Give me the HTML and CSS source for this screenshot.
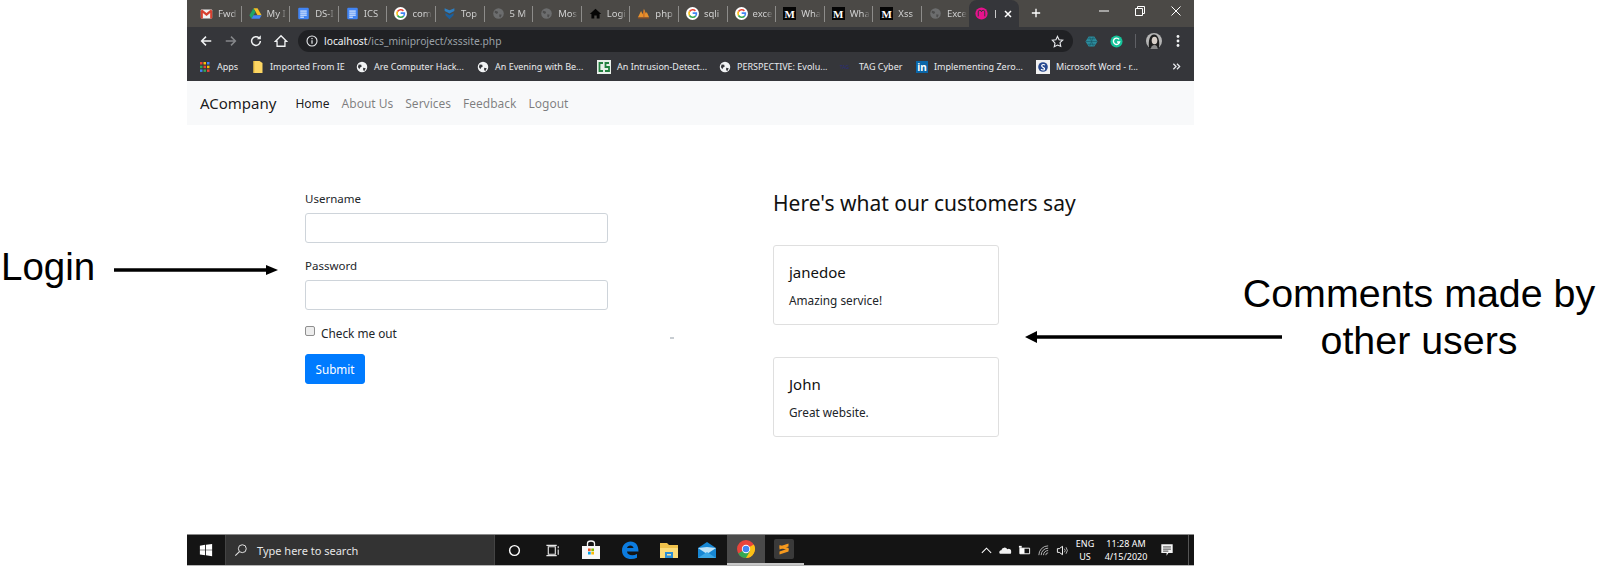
FILE: index.html
```html
<!DOCTYPE html>
<html lang="en">
<head>
  <meta charset="UTF-8">
  <title>ACompany</title>
  <link rel="stylesheet" href="styles.css">
</head>
<body>
  <!-- shared icons -->
  <svg class="sprite" xmlns="http://www.w3.org/2000/svg">
    <symbol id="i-gmail" viewBox="0 0 16 16"><rect x="1" y="3" width="14" height="11" rx="1" fill="#f2f2f2"/><path d="M1 4.500V14h2.500V7.500L8 11l4.500-3.500V14H15V4.500L13.500 3 8 7.500 2.500 3z" fill="#d8402f"/></symbol>
    <symbol id="i-drive" viewBox="0 0 16 16"><path d="M5.500 1.500h5L15.500 10h-5z" fill="#f6c026"/><path d="M5.500 1.500L.5 10 3 14.500 8 6z" fill="#1fa463"/><path d="M3 14.500h10L15.500 10h-10z" fill="#4285f4"/></symbol>
    <symbol id="i-docs" viewBox="0 0 16 16"><rect x="1.500" y="1" width="13" height="14" rx="1.500" fill="#4285f4"/><path d="M4 5h8M4 7.500h8M4 10h8M4 12.500h4.500" stroke="#fff" stroke-width="1.200"/></symbol>
    <symbol id="i-google" viewBox="0 0 16 16"><circle cx="8" cy="8" r="8" fill="#fff"/><path d="M11.600 4.700A4.800 4.800 0 0 0 4.300 5.500" fill="none" stroke="#ea4335" stroke-width="2"/><path d="M4.300 5.500a4.800 4.800 0 0 0 0 5" fill="none" stroke="#fbbc05" stroke-width="2"/><path d="M4.300 10.500a4.800 4.800 0 0 0 7.500.7" fill="none" stroke="#34a853" stroke-width="2"/><path d="M11.800 11.200A4.800 4.800 0 0 0 12.800 7.600H8.200" fill="none" stroke="#4285f4" stroke-width="2"/></symbol>
    <symbol id="i-shield" viewBox="0 0 16 16"><path d="M2 1.500l6 2.500 6-2.500v3.500l-6 3-6-3z" fill="#2f7fc1"/><path d="M3 7.500l5 2.500 5-2.500v2.500L8 15 3 10z" fill="#1c5f9c"/></symbol>
    <symbol id="i-dimglobe" viewBox="0 0 16 16"><circle cx="8" cy="8" r="6.500" fill="#6c6d6e"/><path d="M4 4.500l3 1 .5 2-2 1-2.500-2zM9 9l3 .5-1.500 3.500-1.500-1z" fill="#4d4d4d"/></symbol>
    <symbol id="i-house" viewBox="0 0 16 16"><path d="M8 2L1 8.500h2V14h3.500v-3.500h3V14H13V8.500h2z" fill="#050505"/></symbol>
    <symbol id="i-php" viewBox="0 0 16 16"><path d="M1 13L5 5l2 4 1.500-7L11 8l1-2 3 7z" fill="#e8912d"/><path d="M1 13h14v1.500H1z" fill="#7d4a2a"/><path d="M8.500 5v8" stroke="#b5541c" stroke-width="1"/></symbol>
    <symbol id="i-pink" viewBox="0 0 16 16"><circle cx="8" cy="8" r="7.500" fill="#e6128c"/><path d="M4 11.500V6a2 2 0 0 1 4 0 2 2 0 0 1 4 0v5.500" fill="none" stroke="#35363a" stroke-width="1.200"/></symbol>
    <symbol id="i-globe" viewBox="0 0 16 16"><circle cx="8" cy="8" r="7" fill="#f1f3f4"/><path d="M3.500 4.500l3.500.5.500 2.500-2 1-1 2.500-2-3zM9.500 9l3.500.5-2 4-1.500-1.500z" fill="#35363a"/></symbol>
  </svg>

  <div class="page">
    <div class="shot">
      <div class="tabstrip">
        <div class="tab"><svg class="fav"><use href="#i-gmail"/></svg><span class="tab-title">Fwd</span></div>
        <div class="tab"><svg class="fav"><use href="#i-drive"/></svg><span class="tab-title">My I</span></div>
        <div class="tab"><svg class="fav"><use href="#i-docs"/></svg><span class="tab-title">DS-I</span></div>
        <div class="tab"><svg class="fav"><use href="#i-docs"/></svg><span class="tab-title">ICS</span></div>
        <div class="tab"><svg class="fav"><use href="#i-google"/></svg><span class="tab-title">com</span></div>
        <div class="tab"><svg class="fav"><use href="#i-shield"/></svg><span class="tab-title">Top</span></div>
        <div class="tab"><svg class="fav"><use href="#i-dimglobe"/></svg><span class="tab-title">5 M</span></div>
        <div class="tab"><svg class="fav"><use href="#i-dimglobe"/></svg><span class="tab-title">Mos</span></div>
        <div class="tab"><svg class="fav"><use href="#i-house"/></svg><span class="tab-title">Logi</span></div>
        <div class="tab"><svg class="fav"><use href="#i-php"/></svg><span class="tab-title">php</span></div>
        <div class="tab"><svg class="fav"><use href="#i-google"/></svg><span class="tab-title">sqli</span></div>
        <div class="tab"><svg class="fav"><use href="#i-google"/></svg><span class="tab-title">exce</span></div>
        <div class="tab"><span class="fav fav-m">M</span><span class="tab-title">Wha</span></div>
        <div class="tab"><span class="fav fav-m">M</span><span class="tab-title">Wha</span></div>
        <div class="tab"><span class="fav fav-m">M</span><span class="tab-title">Xss</span></div>
        <div class="tab tab-last"><svg class="fav"><use href="#i-dimglobe"/></svg><span class="tab-title">Exce</span></div>
        <div class="tab tab-active">
          <svg class="fav"><use href="#i-pink"/></svg>
          <span class="tab-bar"></span>
          <svg class="tab-close" viewBox="0 0 10 10"><path d="M2 2l6 6M8 2l-6 6" stroke="#fff" stroke-width="1.500"/></svg>
        </div>
        <svg class="newtab" viewBox="0 0 12 12"><path d="M6 1v10M1 6h10" stroke="#fff" stroke-width="1.600"/></svg>
        <div class="winctl">
          <span class="winbtn"><svg viewBox="0 0 12 12"><path d="M1 6h10" stroke="#fff" stroke-width="1"/></svg></span>
          <span class="winbtn"><svg viewBox="0 0 12 12"><path d="M1.500 3.500h7v7h-7zM3.500 3.500v-2h7v7h-2" fill="none" stroke="#fff" stroke-width="1"/></svg></span>
          <span class="winbtn"><svg viewBox="0 0 12 12"><path d="M1.500 1.500l9 9M10.500 1.500l-9 9" stroke="#fff" stroke-width="1"/></svg></span>
        </div>
      </div>

      <div class="toolbar">
        <svg class="tool" viewBox="0 0 16 16"><path d="M14 8H3M8 3L3 8l5 5" fill="none" stroke="#f1f3f4" stroke-width="1.700"/></svg>
        <svg class="tool" viewBox="0 0 16 16"><path d="M2 8h11M8 3l5 5-5 5" fill="none" stroke="#85878a" stroke-width="1.700"/></svg>
        <svg class="tool" viewBox="0 0 16 16"><path d="M13 8a5 5 0 1 1-1.500-3.500" fill="none" stroke="#f1f3f4" stroke-width="1.700"/><path d="M13.500 1.500v4.500H9z" fill="#f1f3f4"/></svg>
        <svg class="tool" viewBox="0 0 16 16"><path d="M8 2L1.500 8.500h2v5.500h9V8.500h2z" fill="none" stroke="#f1f3f4" stroke-width="1.500"/></svg>
        <div class="urlbar">
          <svg class="url-info" viewBox="0 0 12 12"><circle cx="6" cy="6" r="5" fill="none" stroke="#e8eaed" stroke-width="1.100"/><path d="M6 5.200v3.600M6 3v1.200" stroke="#e8eaed" stroke-width="1.200"/></svg>
          <span class="url-text"><b>localhost</b>/ics_miniproject/xsssite.php</span>
          <svg class="url-star" viewBox="0 0 14 14"><path d="M7 1.500l1.700 3.600 3.900.5-2.900 2.700.8 3.900L7 10.800l-3.500 1.900.8-3.900L1.400 5.600l3.900-.5z" fill="none" stroke="#e8eaed" stroke-width="1.200"/></svg>
        </div>
        <div class="extensions">
          <svg class="ext" viewBox="0 0 14 14"><path d="M4 1.500h6L13.500 7 10 12.500H4L.5 7z" fill="#2c8b9c"/><path d="M1 7h12M3 4h8M3 10h8M5 2l4 10M9 2l-4 10" stroke="#1a5a68" stroke-width=".7"/></svg>
          <svg class="ext" viewBox="0 0 14 14"><circle cx="7" cy="7" r="6.500" fill="#15c39a"/><path d="M9.800 4.700A3.400 3.400 0 1 0 10.400 7.500H7.600" fill="none" stroke="#fff" stroke-width="1.500"/></svg>
          <span class="ext-sep"></span>
          <svg class="avatar" viewBox="0 0 16 16"><circle cx="8" cy="8" r="8" fill="#b5b5b5"/><path d="M3 15C2 7 4 1.500 8 1.500S14 7 13 15z" fill="#1f1f1f"/><ellipse cx="8.500" cy="7.500" rx="2.800" ry="3.800" fill="#d8cfc8"/><path d="M5 16c0-3 1.500-4 3.500-4s3 1 3 4z" fill="#8a8a8a"/></svg>
          <svg class="dots" viewBox="0 0 4 14"><circle cx="2" cy="2.500" r="1.400" fill="#f1f3f4"/><circle cx="2" cy="7" r="1.400" fill="#f1f3f4"/><circle cx="2" cy="11.500" r="1.400" fill="#f1f3f4"/></svg>
        </div>
      </div>

      <div class="bookmarks">
        <div class="bm">
          <svg class="bm-icon" viewBox="0 0 12 12"><path d="M1 1h2.500v2.500H1z" fill="#ea4335"/><path d="M4.500 1H7v2.500H4.500z" fill="#fbbc05"/><path d="M8 1h2.500v2.500H8z" fill="#4285f4"/><path d="M1 4.700h2.500v2.500H1z" fill="#34a853"/><path d="M4.500 4.700H7v2.500H4.500z" fill="#ea4335"/><path d="M8 4.700h2.500v2.500H8z" fill="#fbbc05"/><path d="M1 8.400h2.500v2.500H1z" fill="#4285f4"/><path d="M4.500 8.400H7v2.500H4.500z" fill="#34a853"/><path d="M8 8.400h2.500v2.500H8z" fill="#ea4335"/></svg>
          <span>Apps</span>
        </div>
        <div class="bm">
          <svg class="bm-icon" viewBox="0 0 12 12"><path d="M1.500 0h6l3 2v10h-9z" fill="#fdd663"/><path d="M1.500 0h1v12h-1z" fill="#e8b93a"/></svg>
          <span>Imported From IE</span>
        </div>
        <div class="bm"><svg class="bm-icon"><use href="#i-globe"/></svg><span>Are Computer Hack...</span></div>
        <div class="bm"><svg class="bm-icon"><use href="#i-globe"/></svg><span>An Evening with Be...</span></div>
        <div class="bm">
          <svg class="bm-icon bm-wide" viewBox="0 0 14 14"><rect width="14" height="14" fill="#e9efe9"/><path d="M6 3H2.500v8H6M12 3H8.500v4H12v4H8" fill="none" stroke="#23803f" stroke-width="1.800"/></svg>
          <span>An Intrusion-Detect...</span>
        </div>
        <div class="bm"><svg class="bm-icon"><use href="#i-globe"/></svg><span>PERSPECTIVE: Evolu...</span></div>
        <div class="bm"><span class="bm-tag">TAG</span><span>TAG Cyber</span></div>
        <div class="bm"><span class="bm-in">in</span><span>Implementing Zero...</span></div>
        <div class="bm">
          <svg class="bm-icon bm-wide" viewBox="0 0 14 14"><rect width="14" height="14" fill="#f2f2f2"/><circle cx="7" cy="7" r="4.800" fill="#26488f"/><path d="M9 5C7 3.800 5 5 6 6.500s3 1 2.500 2.700C8 10.500 6 10 5 9.300" fill="none" stroke="#fff" stroke-width="1.200"/></svg>
          <span>Microsoft Word - r...</span>
        </div>
        <svg class="bm-more" viewBox="0 0 10 10"><path d="M1.500 2l3 3-3 3M5.500 2l3 3-3 3" fill="none" stroke="#e8eaed" stroke-width="1.400"/></svg>
      </div>

      <nav class="navbar">
        <a class="brand">ACompany</a>
        <a class="nav-link nav-active">Home</a>
        <a class="nav-link">About Us</a>
        <a class="nav-link">Services</a>
        <a class="nav-link">Feedback</a>
        <a class="nav-link">Logout</a>
      </nav>

      <main class="content">
        <form class="login-form">
          <label class="field-label">Username</label>
          <input class="field" type="text">
          <label class="field-label">Password</label>
          <input class="field" type="password">
          <label class="check-row"><span class="check-box"></span>Check me out</label>
          <button class="submit-btn" type="button">Submit</button>
        </form>
        <section class="comments">
          <h2 class="comments-title">Here's what our customers say</h2>
          <div class="card">
            <h3 class="card-name">janedoe</h3>
            <p class="card-text">Amazing service!</p>
          </div>
          <div class="card">
            <h3 class="card-name">John</h3>
            <p class="card-text">Great website.</p>
          </div>
        </section>
      </main>

      <div class="taskbar">
        <div class="start">
          <svg viewBox="0 0 16 16"><path d="M1 3l6-.9V7.600H1zM8 2l7-1v6.600H8zM1 8.400h6v5.500l-6-.9zM8 8.400h7V15l-7-1z" fill="#fff"/></svg>
        </div>
        <div class="search">
          <svg viewBox="0 0 16 16"><circle cx="9.500" cy="6.500" r="4.500" fill="none" stroke="#e6e6e6" stroke-width="1.100"/><path d="M6.200 9.800L1.500 14.500" stroke="#e6e6e6" stroke-width="1.200"/></svg>
          <span>Type here to search</span>
        </div>
        <div class="task"><svg viewBox="0 0 16 16"><circle cx="8" cy="8" r="5.200" fill="none" stroke="#fff" stroke-width="1.500"/></svg></div>
        <div class="task"><svg viewBox="0 0 16 16"><path d="M3.500 4h7.500v8H3.500zM1.500 2.500h11M1.500 13.500h11" fill="none" stroke="#e6e6e6" stroke-width="1.200"/><path d="M13.500 3.500h1.200v2h-1.200zM13.500 7h1.200v5.500h-1.200z" fill="#e6e6e6"/></svg></div>
        <div class="task"><svg class="task-big" viewBox="0 0 20 20"><path d="M1 6h18v13H1z" fill="#f7f7f7"/><path d="M6.500 6V3.500a3.500 2.500 0 0 1 7 0V6" fill="none" stroke="#f7f7f7" stroke-width="1.300"/><path d="M7 8.500h2.700v2.700H7z" fill="#f25022"/><path d="M10.300 8.500H13v2.700h-2.700z" fill="#7fba00"/><path d="M7 11.800h2.700v2.700H7z" fill="#00a4ef"/><path d="M10.300 11.800H13v2.700h-2.700z" fill="#ffb900"/></svg></div>
        <div class="task"><svg class="task-big" viewBox="0 0 20 20"><path d="M2 10.500C2 5 6 1.500 10.500 1.500 15.500 1.500 18.500 5 18.500 11.500H7c.3 3.800 5.500 5 10 2.500v3.800c-6 2.700-15 1.200-15-7.300zM7 8h6.500C13.300 4.500 7.500 4.500 7 8z" fill="#0c7ce0"/></svg></div>
        <div class="task"><svg class="task-big" viewBox="0 0 20 20"><path d="M1 3h7l2 2h9v13H1z" fill="#f0c24b"/><path d="M1 8h18v10H1z" fill="#fbdc79"/><path d="M6 12h8v6H6z" fill="#2a8fd8"/><path d="M8 14h4v1.500H8z" fill="#f6e3a0"/></svg></div>
        <div class="task"><svg class="task-big" viewBox="0 0 20 20"><path d="M1 8l9-6 9 6v10H1z" fill="#1787d4"/><path d="M1 8l9 6 9-6-9-1z" fill="#bfe3f7"/><path d="M1 18l9-6 9 6z" fill="#3ba7e6"/></svg></div>
        <div class="task task-active"><svg class="task-big" viewBox="0 0 20 20"><circle cx="10" cy="10" r="9" fill="#e8453c"/><path d="M10 10v9a9 9 0 0 0 7.800-13.500z" fill="#fbc116"/><path d="M10 10L2.200 14.500A9 9 0 0 0 10 19l3.900-6.800z" fill="#34a853"/><circle cx="10" cy="10" r="4.200" fill="#fff"/><circle cx="10" cy="10" r="3.300" fill="#4285f4"/></svg></div>
        <div class="task task-open"><span class="sublime"><svg viewBox="0 0 14 14"><path d="M11.500 1.500L2.500 4.500v3l9-3zM11.500 6.500l-9 3v3l9-3z" fill="#f79a1e"/><path d="M2.500 5.500l9 3V6l-9-3z" fill="#f79a1e"/></svg></span></div>

        <div class="tray">
          <svg class="tray-icon" viewBox="0 0 14 14"><path d="M2 9.500L7 4.500l5 5" fill="none" stroke="#fff" stroke-width="1.100"/></svg>
          <svg class="tray-icon" viewBox="0 0 14 14"><path d="M1 10.500a2.200 2.200 0 0 1 1.500-3.800 3.500 3.500 0 0 1 6.500-1A2.600 2.600 0 0 1 13 8.500a2 2 0 0 1-.5 2z" fill="#f1f1f1"/></svg>
          <svg class="tray-icon" viewBox="0 0 14 14"><path d="M2 4.500h10.500v6H2z" fill="none" stroke="#fff" stroke-width="1"/><path d="M2 4.500h5v6H2z" fill="#fff"/><path d="M1 2v2h3V2z" fill="#fff"/></svg>
          <svg class="tray-icon" viewBox="0 0 14 14"><path d="M2 12a10 10 0 0 1 10-10M4.500 12A7.500 7.500 0 0 1 12 4.500M7 12a5 5 0 0 1 5-5M9.500 12A2.500 2.500 0 0 1 12 9.500" fill="none" stroke="#cfcfcf" stroke-width=".9"/></svg>
          <svg class="tray-icon" viewBox="0 0 14 14"><path d="M1.500 5h2L7 2.500v9L3.500 9h-2z" fill="none" stroke="#fff" stroke-width="1"/><path d="M9 5a3 3 0 0 1 0 4M10.800 3.500a5.500 5.500 0 0 1 0 7" fill="none" stroke="#d0d0d0" stroke-width=".9"/></svg>
          <div class="tray-lang">ENG<br>US</div>
          <div class="tray-clock">11:28 AM<br>4/15/2020</div>
          <svg class="tray-note" viewBox="0 0 16 16"><path d="M1.500 1.500h13v10h-5l-2 3v-3h-6z" fill="#f4f4f4"/><path d="M3.500 4.500h9M3.500 7h9M3.500 9.300h6" stroke="#1a1a1a" stroke-width=".9"/></svg>
          <span class="tray-edge"></span>
        </div>
      </div>
    </div>

    <!-- annotations sit on top of the screenshot -->
    <div class="note note-login">Login</div>
    <svg class="arrow arrow-login" viewBox="0 0 164 12"><path d="M0 6h154" stroke="#000" stroke-width="3.500"/><path d="M152 1l12 5-12 5z" fill="#000"/></svg>
    <div class="note note-comments">Comments made by<br>other users</div>
    <svg class="arrow arrow-comments" viewBox="0 0 257 12"><path d="M10 6h247" stroke="#000" stroke-width="3.500"/><path d="M12 0L0 6l12 6z" fill="#000"/></svg>
    <span class="speck"></span>
  </div>
</body>
</html>
```

FILE: styles.css
```css
* {
  box-sizing: border-box;
}
body {
  margin: 0;
  background: #fff;
  font-family: "Noto Sans", "Liberation Sans", sans-serif;
}
.sprite {
  position: absolute;
  width: 0;
  height: 0;
}
.page {
  position: relative;
  width: 1600px;
  height: 566px;
  overflow: hidden;
}
.shot {
  display: flex;
  flex-direction: column;
  width: 1007px;
  height: 566px;
  margin-left: 187px;
}

/* tabs */
.tabstrip {
  display: flex;
  align-items: stretch;
  height: 27px;
  padding-left: 6px;
  background: #4b4946;
}
.tab {
  position: relative;
  display: flex;
  align-items: center;
  width: 48.6px;
  padding-left: 7px;
  font-size: 9.500px;
  color: #d0d0d0;
}
.tab::after {
  content: "";
  position: absolute;
  right: 0;
  top: 6px;
  width: 1px;
  height: 16px;
  background: #8d8c8a;
}
.tab-last::after,
.tab-active::after {
  display: none;
}
.fav {
  flex: none;
  width: 13px;
  height: 13px;
  margin-right: 5px;
}
.fav-m {
  display: flex;
  align-items: center;
  justify-content: center;
  background: #050505;
  color: #fff;
  font-family: "Liberation Serif", serif;
  font-size: 11px;
  font-weight: bold;
}
.tab-title {
  width: 20px;
  overflow: hidden;
  white-space: nowrap;
  -webkit-mask-image: linear-gradient(to right, #000 65%, transparent);
  mask-image: linear-gradient(to right, #000 65%, transparent);
}
.tab-active {
  width: 50px;
  margin-left: -1.500px;
  padding-left: 6px;
  background: #35363a;
  border-radius: 8px 8px 0 0;
}
.tab-active .fav {
  margin-right: 7px;
}
.tab-bar {
  width: 1px;
  height: 8px;
  margin-right: 7px;
  background: #c9c9c9;
}
.tab-close {
  width: 10px;
  height: 10px;
}
.newtab {
  width: 10px;
  height: 10px;
  margin: 8px 0 0 12px;
}
.winctl {
  display: flex;
  margin-left: auto;
}
.winbtn {
  display: flex;
  justify-content: center;
  width: 36px;
  padding-top: 5px;
}
.winbtn svg {
  width: 12px;
  height: 12px;
}

/* address bar */
.toolbar {
  display: flex;
  align-items: center;
  height: 25px;
  padding: 3px 0 0 6px;
  background: #35363a;
}
.tool {
  width: 14px;
  height: 14px;
  margin: 0 5.500px;
}
.urlbar {
  display: flex;
  align-items: center;
  width: 775px;
  height: 22px;
  margin-left: 5px;
  padding: 0 8px;
  background: #202124;
  border-radius: 11px;
}
.url-info {
  width: 12px;
  height: 12px;
  margin-right: 6px;
}
.url-text {
  flex: 1;
  font-size: 10.300px;
  color: #9aa0a6;
}
.url-text b {
  font-weight: normal;
  color: #f1f3f4;
}
.url-star {
  width: 13px;
  height: 13px;
  margin-right: 1px;
}
.extensions {
  display: flex;
  align-items: center;
  flex: 1;
  padding-left: 12px;
}
.ext {
  width: 13px;
  height: 13px;
  margin-right: 12px;
}
.ext-sep {
  width: 1px;
  height: 14px;
  margin-right: 10px;
  background: #5f6065;
}
.avatar {
  width: 16px;
  height: 16px;
  margin-right: 14px;
}
.dots {
  width: 4px;
  height: 14px;
}

/* bookmarks */
.bookmarks {
  display: grid;
  grid-template-columns: 53px 104px 121px 120px 122px 121px 76px 120px 136px auto;
  align-items: center;
  height: 29px;
  padding-left: 12px;
  background: #35363a;
  font-size: 9px;
  color: #e8eaed;
  white-space: nowrap;
}
.bm {
  display: flex;
  align-items: center;
}
.bm-icon {
  flex: none;
  width: 12px;
  height: 12px;
  margin-right: 6px;
}
.bm-wide {
  width: 14px;
  height: 14px;
}
.bm-tag {
  width: 13px;
  margin-right: 6px;
  font-size: 5px;
  color: #2a2d78;
}
.bm-in {
  width: 12px;
  height: 12px;
  margin-right: 6px;
  background: #0a66a8;
  color: #fff;
  font-size: 10px;
  font-weight: bold;
  line-height: 12px;
  text-align: center;
}
.bm-more {
  width: 9px;
  height: 9px;
}

/* navbar */
.navbar {
  display: flex;
  align-items: center;
  height: 44px;
  padding-left: 13px;
  background: #f8f9fa;
}
.brand {
  margin-right: 19px;
  font-size: 15px;
  color: rgba(0, 0, 0, .9);
}
.nav-link {
  margin-right: 12px;
  font-size: 12px;
  color: rgba(0, 0, 0, .5);
}
.nav-active {
  color: rgba(0, 0, 0, .9);
}

/* page content */
.content {
  display: flex;
  flex: 1;
  padding: 63px 0 0 118px;
  background: #fff;
}
.login-form {
  display: flex;
  flex-direction: column;
  align-items: flex-start;
  width: 304px;
  margin-right: 164px;
}
.field-label {
  height: 20px;
  margin-bottom: 5px;
  font-size: 11.500px;
  line-height: 21px;
  color: #212529;
}
.field {
  width: 303px;
  height: 30px;
  margin-bottom: 12px;
  background: #fff;
  border: 1px solid #ced4da;
  border-radius: 3px;
}
.check-row {
  display: flex;
  align-items: center;
  height: 20px;
  margin-bottom: 12px;
  padding-top: 2px;
  font-size: 11.800px;
  color: #212529;
}
.check-box {
  width: 10px;
  height: 10px;
  margin: -5px 6px 0 0;
  background: #ededed;
  border: 1px solid #8f8f8f;
  border-radius: 2px;
}
.submit-btn {
  width: 60px;
  height: 30px;
  padding: 0;
  background: #007bff;
  border: 1px solid #007bff;
  border-radius: 3px;
  color: #fff;
  font-family: inherit;
  font-size: 11.700px;
}
.comments-title {
  height: 28px;
  margin: 1px 0 28px;
  font-size: 21px;
  font-weight: 400;
  line-height: 28px;
  color: #111;
}
.card {
  width: 226px;
  margin-bottom: 32px;
  padding: 15px 15px 14px;
  border: 1px solid #dfdfdf;
  border-radius: 3px;
}
.card-name {
  margin: 0 0 7px;
  font-size: 15px;
  font-weight: 400;
  line-height: 22px;
  color: #111;
}
.card-text {
  margin: 0;
  font-size: 11.800px;
  line-height: 20px;
  color: #212529;
}

/* windows taskbar */
.taskbar {
  display: flex;
  flex: none;
  height: 32px;
  background: #141414;
  border-top: 1px solid #8a8a8a;
  border-bottom: 1px solid #b5b5b5;
}
.start {
  display: flex;
  align-items: center;
  justify-content: center;
  width: 39px;
  border-right: 1px solid #444;
}
.start svg {
  width: 14px;
  height: 14px;
}
.search {
  display: flex;
  align-items: center;
  width: 269px;
  padding-left: 8px;
  background: #333;
  border-right: 1px solid #444;
  font-size: 11px;
  color: #e6e6e6;
}
.search svg {
  width: 14px;
  height: 14px;
  margin-right: 9px;
}
.task {
  display: flex;
  align-items: center;
  justify-content: center;
  width: 38.600px;
}
.task svg {
  width: 15px;
  height: 15px;
}
.task svg.task-big {
  width: 20px;
  height: 20px;
}
.task-active {
  background: #4a4a4a;
  border-bottom: 2px solid #c8c8c8;
}
.task-open {
  border-bottom: 2px solid #c8c8c8;
}
.sublime {
  display: flex;
  align-items: center;
  justify-content: center;
  width: 20px;
  height: 20px;
  background: #3a3a3a;
  border-radius: 2px;
}
.task .sublime svg {
  width: 14px;
  height: 14px;
}
.tray {
  display: flex;
  align-items: center;
  margin-left: auto;
  color: #fff;
  font-size: 9px;
  line-height: 13px;
  text-align: center;
}
.tray-icon {
  width: 13px;
  height: 13px;
  margin-right: 6px;
}
.tray-lang {
  width: 20px;
}
.tray-clock {
  width: 62px;
}
.tray-note {
  width: 14px;
  height: 14px;
  margin: 0 14px 0 3px;
}
.tray-edge {
  align-self: stretch;
  width: 6px;
  border-left: 1px solid #555;
}

/* annotations */
.note {
  position: absolute;
  font-family: "Liberation Sans", Arial, sans-serif;
  color: #000;
}
.note-login {
  left: 1px;
  top: 245px;
  font-size: 38.500px;
  line-height: 44px;
}
.note-comments {
  left: 1239px;
  top: 270px;
  width: 360px;
  font-size: 39.400px;
  line-height: 47px;
  text-align: center;
}
.arrow {
  position: absolute;
  height: 12px;
}
.arrow-login {
  left: 114px;
  top: 264px;
  width: 164px;
}
.arrow-comments {
  left: 1025px;
  top: 331px;
  width: 257px;
}
.speck {
  position: absolute;
  left: 670px;
  top: 337px;
  width: 4px;
  height: 2px;
  background: #c8cdd2;
}
```
